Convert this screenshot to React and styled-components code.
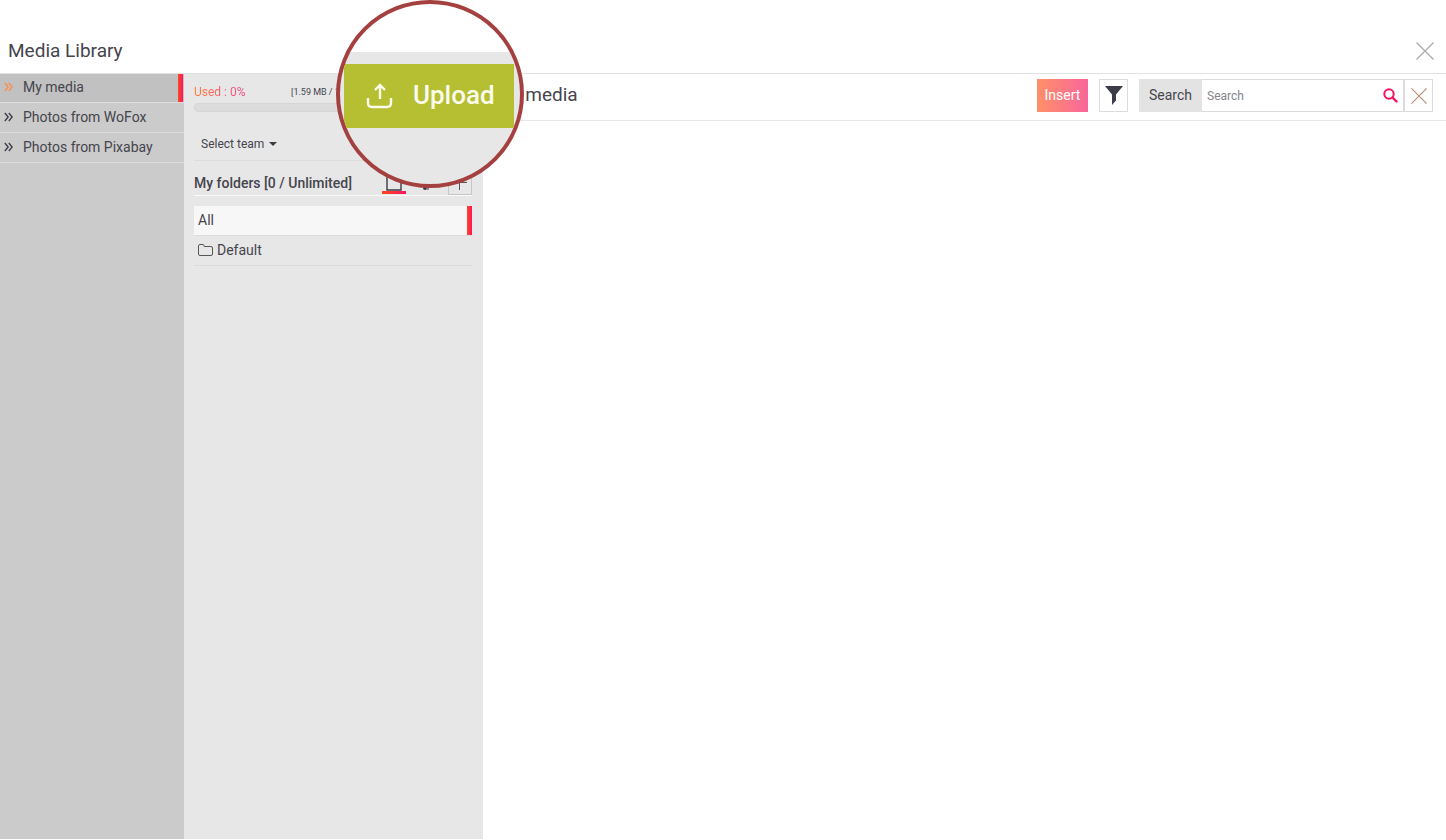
import { useState } from "react";
import styled, { createGlobalStyle } from "styled-components";

const links = ["My media", "Photos from WoFox", "Photos from Pixabay"];

const App = () => {
  const [active, setActive] = useState("My media");
  const [search, setSearch] = useState("");

  const handleSearch = (e) => {
    setSearch(e.target.value);
  };

  return (
    <Page>
      <GlobalStyle />
      <Header>
        <Title>Media Library</Title>
        <PlainButton aria-label="Close">
          <Cross size={18} color="#a9a9a9" />
        </PlainButton>
      </Header>
      <Body>
        <Sidebar>
          {links.map((link) => (
            <SideLink
              href="#"
              key={link}
              $active={link === active}
              onClick={() => setActive(link)}
            >
              <Chevrons viewBox="0 0 9 10">
                <path d="M0.8 1 4.2 5 0.8 9M4.8 1 8.2 5 4.8 9" />
              </Chevrons>
              <span>{link}</span>
            </SideLink>
          ))}
        </Sidebar>

        <Folders>
          <Storage>
            <Usage>
              <Used>Used : 0%</Used>
              <Quota>[1.59 MB / 1 GB]</Quota>
            </Usage>
            <Bar />
          </Storage>
          <TeamRow>
            <TeamButton>
              Select team
              <Caret />
            </TeamButton>
          </TeamRow>
          <FolderHead>
            <FolderTitle>My folders [0 / Unlimited]</FolderTitle>
            <Tools>
              <Tool $active aria-label="My folders">
                <svg width="16" height="18" viewBox="0 0 16 18">
                  <path
                    d="M1 1h14v15H1z"
                    fill="none"
                    stroke="#3b3b45"
                    strokeWidth="1.4"
                  />
                </svg>
              </Tool>
              <Tool aria-label="Shared folders">
                <svg width="12" height="14" viewBox="0 0 12 14">
                  <circle cx="4" cy="10" r="2" fill="#3b3b45" />
                  <path d="M7 8v4" stroke="#3b3b45" />
                </svg>
              </Tool>
              <AddButton aria-label="Add folder">
                <svg width="14" height="14" viewBox="0 0 14 14">
                  <path d="M6.5 0v14M0 6.5h14" stroke="#55555c" />
                </svg>
              </AddButton>
            </Tools>
          </FolderHead>
          <FolderList>
            <Folder $active href="#">
              All
            </Folder>
            <Folder href="#">
              <svg width="15" height="12" viewBox="0 0 15 12">
                <path
                  d="M.5 2Q.5.5 2 .5h3Q6 .5 6.3 2.5H13q1.5 0 1.5 1.5V10q0 1.5-1.5 1.5H2Q.5 11.5.5 10Z"
                  fill="none"
                  stroke="#55555c"
                />
              </svg>
              Default
            </Folder>
          </FolderList>
        </Folders>

        <Main>
          <Toolbar>
            <Heading>My media</Heading>
            <Actions>
              <Insert>Insert</Insert>
              <BoxButton aria-label="Filter">
                <svg width="18" height="19" viewBox="0 0 18 19">
                  <path d="M0 0h18l-7 8.5v6L7 19V8.5z" fill="#3b3b49" />
                </svg>
              </BoxButton>
              <SearchGroup>
                <SearchLabel htmlFor="search">Search</SearchLabel>
                <SearchBox>
                  <SearchInput
                    id="search"
                    placeholder="Search"
                    value={search}
                    onChange={handleSearch}
                  />
                  <PlainButton aria-label="Run search">
                    <svg width="15" height="15" viewBox="0 0 15 15">
                      <circle
                        cx="6"
                        cy="6"
                        r="4.7"
                        fill="none"
                        stroke="#f5145f"
                        strokeWidth="2"
                      />
                      <path
                        d="m9.5 9.5 4 4"
                        stroke="#f5145f"
                        strokeWidth="2.4"
                        strokeLinecap="round"
                      />
                    </svg>
                  </PlainButton>
                </SearchBox>
                <BoxButton
                  aria-label="Clear search"
                  onClick={() => setSearch("")}
                >
                  <Cross size={16} color="#b98a76" />
                </BoxButton>
              </SearchGroup>
            </Actions>
          </Toolbar>
        </Main>
      </Body>

      <Lens>
        <Upload>
          <svg width="28" height="28" viewBox="0 0 28 28">
            <path
              d="M2 17v5q0 4 4 4h15q4 0 4-4v-5M14 18V4M9 9l5-5 5 5"
              fill="none"
              stroke="#fbfbee"
              strokeWidth="2.4"
            />
          </svg>
          Upload
        </Upload>
      </Lens>
    </Page>
  );
};

export default App;

const Cross = ({ size, color }) => (
  <svg width={size} height={size} viewBox="0 0 18 18">
    <path d="M.5.5l17 17M17.5.5l-17 17" stroke={color} strokeWidth="1.2" />
  </svg>
);

const GlobalStyle = createGlobalStyle`
  * {
    box-sizing: border-box;
  }
  body {
    margin: 0;
    background: #ffffff;
    color: #45454d;
    font-family: Roboto, "Liberation Sans", sans-serif;
    font-size: 14px;
    line-height: 20px;
  }
  button, input {
    font: inherit;
    color: inherit;
  }
  button {
    cursor: pointer;
  }
  a {
    color: inherit;
    text-decoration: none;
  }
  svg {
    display: block;
    flex: none;
  }
`;

const Page = styled.div`
  position: relative;
  display: flex;
  flex-direction: column;
  min-height: 100vh;
  padding-bottom: 1px;
`;

const Header = styled.header`
  display: flex;
  justify-content: space-between;
  align-items: center;
  padding: 28px 12px 0 8px;
  height: 74px;
  border-bottom: 1px solid #e2e2e2;
`;

const Title = styled.h1`
  margin: 0;
  font-size: 19px;
  font-weight: 400;
  line-height: 24px;
`;

const PlainButton = styled.button`
  padding: 0;
  border: 0;
  background: none;
`;

const Body = styled.div`
  display: flex;
  flex: 1;
`;

const Sidebar = styled.nav`
  width: 184px;
  flex: none;
  background: #cbcbcb;
`;

const SideLink = styled.a`
  display: flex;
  align-items: center;
  gap: 10px;
  height: ${(props) => (props.$active ? "29px" : "30px")};
  padding-left: 4px;
  padding-bottom: 2px;
  border-bottom: 1px solid #dedede;
  background: ${(props) =>
    props.$active
      ? "linear-gradient(90deg, #ff4a1c, #fa1464) right 1px top / 5px 100% no-repeat #c1c1c1"
      : "none"};

  svg {
    stroke: ${(props) => (props.$active ? "#ff8a4a" : "#3b3b45")};
  }
`;

const Chevrons = styled.svg`
  width: 9px;
  height: 10px;
  fill: none;
  stroke-width: 1.3;
`;

const Folders = styled.aside`
  width: 299px;
  flex: none;
  padding: 6px 11px 0 10px;
  background: #e7e7e7;
`;

const Storage = styled.div`
  width: 182px;
`;

const Usage = styled.div`
  display: flex;
  justify-content: space-between;
  align-items: center;
  height: 23px;
`;

const Used = styled.span`
  font-size: 12px;
  color: transparent;
  background: linear-gradient(90deg, #ff7a3c, #f0468c);
  background-clip: text;
`;

const Quota = styled.span`
  width: 85px;
  font-size: 9px;
  white-space: nowrap;
`;

const Bar = styled.div`
  height: 9px;
  border: 1px solid #d6d6d6;
  border-radius: 4px;
  background: #dcdcdc;
`;

const TeamRow = styled.div`
  display: flex;
  align-items: flex-end;
  height: 49px;
  padding: 0 0 6px 7px;
  border-bottom: 1px solid #dcdcdc;
`;

const TeamButton = styled(PlainButton)`
  display: flex;
  align-items: center;
  gap: 5px;
  font-size: 12px;
`;

const Caret = styled.span`
  border: 4px solid transparent;
  border-top-color: #3b3b45;
  border-bottom: 0;
`;

const FolderHead = styled.div`
  display: flex;
  justify-content: space-between;
  align-items: flex-end;
  height: 35px;
  border-bottom: 1px solid #fafafa;
`;

const FolderTitle = styled.h2`
  margin: 0;
  padding-bottom: 2px;
  font-size: 14px;
  font-weight: 500;
  line-height: 20px;
`;

const Tools = styled.div`
  display: flex;
  align-items: flex-end;
  gap: 9px;
`;

const Tool = styled(PlainButton)`
  display: flex;
  justify-content: center;
  align-items: flex-end;
  width: 24px;
  height: 24px;
  padding-bottom: 3px;
  background: ${(props) =>
    props.$active
      ? "linear-gradient(90deg, #ff4a1c, #fa1464) bottom 1px left / 100% 3px no-repeat"
      : "none"};
`;

const AddButton = styled.button`
  display: flex;
  justify-content: center;
  align-items: center;
  width: 24px;
  height: 24px;
  padding: 0;
  border: 1px solid #c6c6c6;
  background: none;
`;

const FolderList = styled.div`
  padding-top: 10px;
`;

const Folder = styled.a`
  display: flex;
  align-items: center;
  gap: 4px;
  height: 30px;
  padding: 0 4px 2px;
  border-bottom: 1px solid #dcdcdc;
  background: ${(props) =>
    props.$active
      ? "linear-gradient(90deg, #ff4a1c, #fa1464) right / 5px 100% no-repeat #f7f7f7"
      : "none"};
`;

const Main = styled.main`
  flex: 1;
  min-width: 0;
`;

const Toolbar = styled.div`
  display: flex;
  justify-content: space-between;
  align-items: flex-start;
  padding: 5px 13px 8px 12px;
  border-bottom: 1px solid #e8e8e8;
`;

const Heading = styled.h2`
  margin: 0;
  font-size: 19px;
  font-weight: 400;
  line-height: 32px;
`;

const Actions = styled.div`
  display: flex;
  gap: 11px;
`;

const Insert = styled.button`
  height: 33px;
  width: 51px;
  padding: 0 0 2px;
  border: 0;
  color: #ffffff;
  background: linear-gradient(90deg, #ff9068, #f9669b);
`;

const BoxButton = styled.button`
  display: flex;
  justify-content: center;
  align-items: center;
  width: 29px;
  height: 33px;
  padding: 0;
  border: 1px solid #dcdcdc;
  background: #ffffff;
`;

const SearchGroup = styled.div`
  display: flex;
`;

const SearchLabel = styled.label`
  width: 63px;
  height: 33px;
  line-height: 32px;
  text-align: center;
  background: #e3e3e3;
`;

const SearchBox = styled.div`
  display: flex;
  align-items: center;
  width: 202px;
  padding: 0 5px;
  border: 1px solid #dcdcdc;
  border-left: 0;
`;

const SearchInput = styled.input`
  flex: 1;
  min-width: 0;
  padding: 0;
  border: 0;
  outline: none;
  background: none;
  font-size: 12px;

  &::placeholder {
    color: #85858a;
  }
`;

/* magnified view of the upload button, lies over the header and panels */
const Lens = styled.div`
  position: absolute;
  top: 0;
  left: 336px;
  width: 188px;
  height: 188px;
  padding: 60px 4px;
  overflow: hidden;
  border: 4px solid #a54040;
  border-radius: 50%;
  background: linear-gradient(#ffffff 48px, #e7e7e7 48px);
`;

const Upload = styled.button`
  display: flex;
  align-items: center;
  gap: 19px;
  width: 170px;
  height: 64px;
  padding: 0 0 2px 22px;
  border: 0;
  color: #fbfbee;
  background: #b5bf31;
  font-size: 26px;
  font-weight: 500;
`;
